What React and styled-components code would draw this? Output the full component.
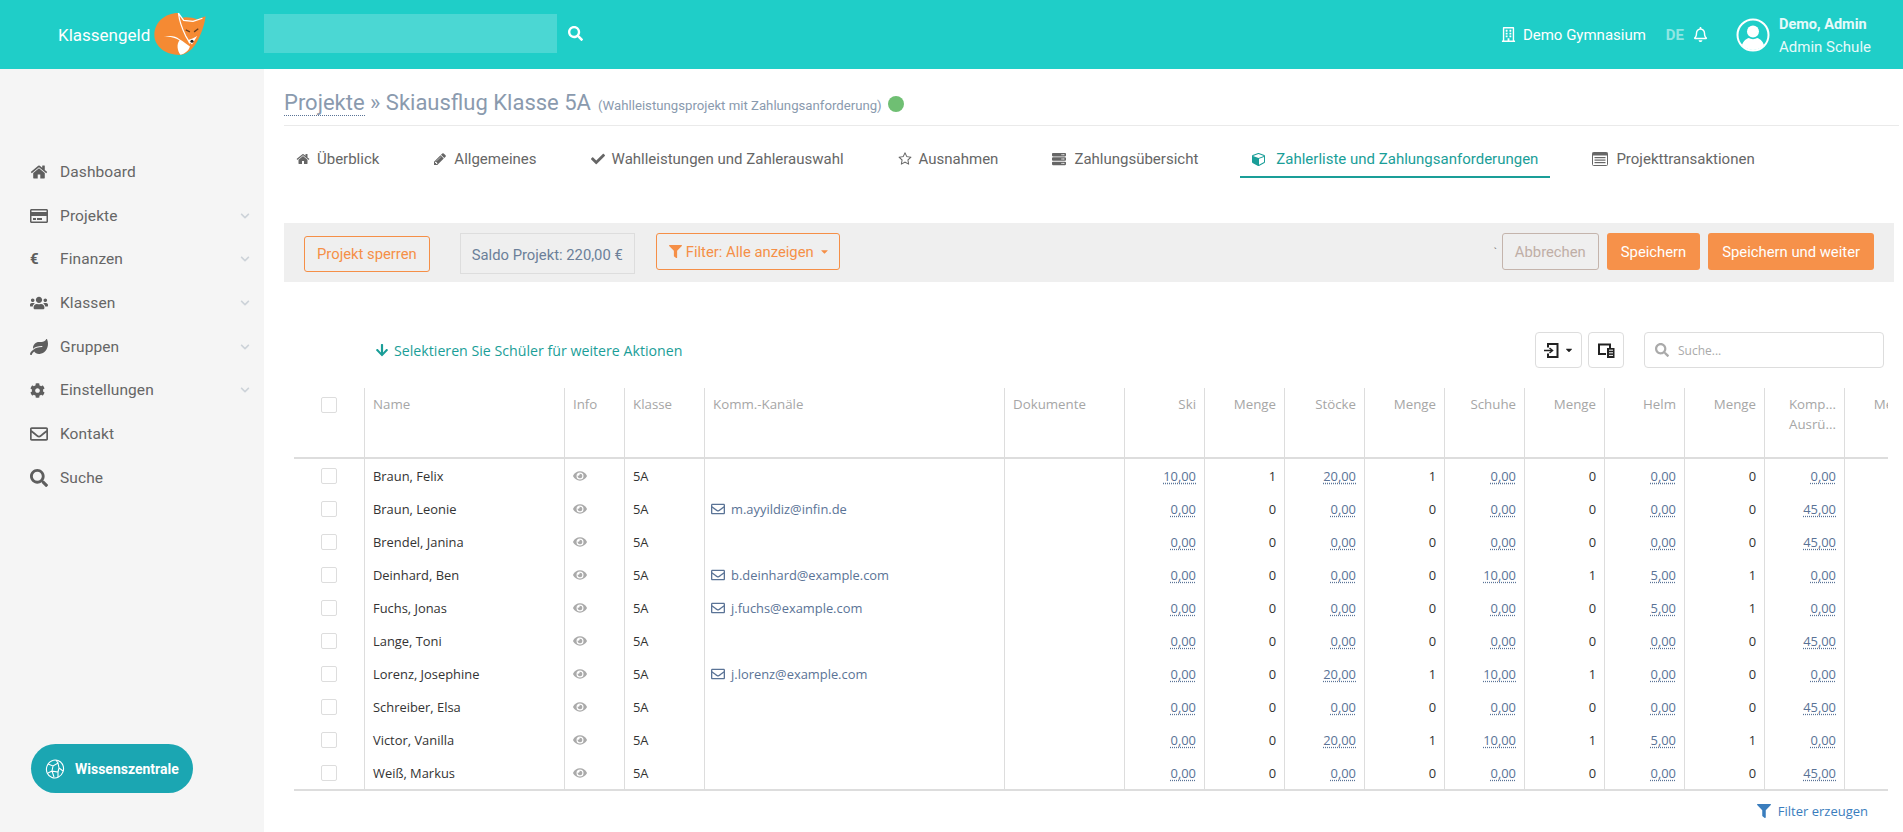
import styled, { createGlobalStyle } from 'styled-components';
import {
    FaCheck, FaServer, FaRegCreditCard, FaUsers, FaLeaf, FaCog, FaRegEnvelope, FaSearch,
    FaEye, FaArrowDown, FaFilter, FaRegBell, FaRegBuilding, FaChevronDown, FaCaretDown,
} from 'react-icons/fa';

const GlobalStyle = createGlobalStyle`
    * { box-sizing: border-box; }
    html, body { margin: 0; padding: 0; height: 100%; overflow: hidden; }
    body { font-family: Roboto, "Liberation Sans", sans-serif; background: #fff; color: #333; }
`

const Page = styled.div`
    height: 832px;
    display: flex;
    flex-direction: column;
`
const TopBar = styled.header`
    height: 69px;
    flex: none;
    background: #1fcec8;
    display: flex;
    align-items: center;
    color: #fff;
`
const Brand = styled.div`
    width: 264px;
    padding-left: 58px;
    display: flex;
    align-items: center;
    gap: 3px;
    font-size: 17px;
`
const SearchBlock = styled.div`
    width: 293px;
    height: 39px;
    background: rgba(255, 255, 255, 0.2);
    margin-top: -2px;
`
const SearchGlyph = styled(FaSearch)`
    font-size: 15px;
    margin-left: 11px;
    margin-top: -2px;
`
const TopRight = styled.div`
    margin-left: auto;
    display: flex;
    align-items: center;
    padding-right: 32px;
    font-size: 15px;
`
const School = styled.div`
    display: flex;
    align-items: center;
    gap: 7px;
    margin-right: 20px;
    svg { font-size: 15px; }
`
const Lang = styled.span`
    font-weight: 700;
    font-size: 15px;
    color: rgba(255, 255, 255, 0.5);
    margin-right: 9px;
`
const Avatar = styled.svg`
    width: 34px;
    height: 34px;
    margin-left: 28px;
    margin-right: 9px;
`
const UserBox = styled.div`
    line-height: 23px;
    margin-top: 2px;
    color: #e6fafa;
`
const UserName = styled.div`
    font-weight: 700;
    font-size: 14.5px;
`

const Body = styled.div`
    flex: 1;
    display: flex;
    min-height: 0;
`
const Sidebar = styled.aside`
    width: 264px;
    flex: none;
    background: #f5f5f5;
    padding-top: 81px;
    display: flex;
    flex-direction: column;
`
const NavItem = styled.div`
    height: 43.7px;
    flex: none;
    padding: 0 14px 0 30px;
    display: flex;
    align-items: center;
    color: #666;
    font-size: 15.5px;
    letter-spacing: 0.1px;
`
const NavIcon = styled.span`
    width: 30px;
    display: flex;
    align-items: center;
    font-size: 18px;
    color: #5e5e5e;
`
const EuroGlyph = styled.span`
    font-size: 15px;
    font-weight: 700;
`
const NavChevron = styled(FaChevronDown)`
    margin-left: auto;
    font-size: 10px;
    color: #cdd3d9;
`
const HelpPill = styled.div`
    margin: auto 0 39px 31px;
    width: 162px;
    height: 49px;
    border-radius: 25px;
    background: #1ba6b2;
    color: #fff;
    display: flex;
    align-items: center;
    padding-left: 14px;
    gap: 10px;
    font-size: 14px;
    font-weight: 700;
`

const Main = styled.main`
    flex: 1;
    min-width: 0;
    padding: 0 4px 0 20px;
`
const TitleRow = styled.div`
    height: 57px;
    display: flex;
    align-items: center;
    padding-top: 11px;
    border-bottom: 1px solid #eaeaea;
    color: #8a9aae;
    font-size: 22px;
    white-space: nowrap;
`
const TitleLink = styled.span`
    border-bottom: 1px dotted #5a7396;
    line-height: 25px;
`
const TitleSub = styled.span`
    font-size: 13.2px;
    margin: 5px 6px 0 7px;
`
const StatusDot = styled.span`
    width: 16px;
    height: 16px;
    border-radius: 50%;
    background: #6fbf73;
    margin-top: 2px;
`
const Tabs = styled.nav`
    display: flex;
    height: 52px;
    gap: 30px;
`
const Tab = styled.div`
    padding: 15px 12px 0;
    display: flex;
    align-items: center;
    gap: ${p => p.$gap || 7}px;
    font-size: 15px;
    white-space: nowrap;
    color: ${p => p.$active ? '#1a9e98' : '#666'};
    border-bottom: 2px solid ${p => p.$active ? '#1a9e98' : 'transparent'};
    svg { font-size: 14px; flex: none; }
`
const Toolbar = styled.div`
    margin: 45px 5px 0 0;
    height: 59px;
    background: #efefef;
    display: flex;
    align-items: flex-start;
    padding: 10px 20px 0 20px;
    font-size: 14.8px;
`
const OutlineButton = styled.div`
    height: 36px;
    border: 1px solid #f58f47;
    border-radius: 3px;
    color: #f58f47;
    padding: 0 12px;
    display: flex;
    align-items: center;
    gap: 4px;
    white-space: nowrap;
`
const LockButton = styled(OutlineButton)`
    margin-top: 3px;
    margin-right: 30px;
`
const FilterButton = styled(OutlineButton)`
    margin-left: 21px;
    height: 37px;
    padding-right: 9px;
    svg { font-size: 13px; }
`
const CaretMark = styled(FaCaretDown)`
    margin-left: 1px;
`
const Saldo = styled.div`
    height: 41px;
    border: 1px solid #ddd;
    color: #6b7f99;
    padding: 2px 11px 0;
    display: flex;
    align-items: center;
    white-space: nowrap;
`
const Tick = styled.span`
    margin-left: auto;
    margin-top: 15px;
    width: 8px;
    color: #777;
    font-size: 11px;
    line-height: 10px;
`
const CancelButton = styled.div`
    height: 37px;
    margin-right: 8px;
    padding: 0 12px;
    border: 1px solid #c4b4ac;
    border-radius: 3px;
    color: #bfaea6;
    display: flex;
    align-items: center;
`
const SaveButton = styled.div`
    height: 37px;
    margin-left: ${p => p.$gap ? 8 : 0}px;
    padding: 0 14px;
    border-radius: 3px;
    background: #f6914a;
    color: #fff;
    display: flex;
    align-items: center;
    white-space: nowrap;
`
const ActionsRow = styled.div`
    margin: 50px 15px 0 0;
    height: 36px;
    display: flex;
    align-items: center;
    padding-left: 91px;
`
const SelectHint = styled.div`
    display: flex;
    align-items: center;
    gap: 5px;
    color: #1a9e98;
    font-family: "Open Sans", sans-serif;
    font-size: 14.2px;
    svg { font-size: 14px; }
`
const IconButton = styled.div`
    height: 36px;
    border: 1px solid #ddd;
    border-radius: 4px;
    display: flex;
    align-items: center;
    justify-content: center;
    gap: 5px;
    color: #222;
    width: ${p => p.$w}px;
    margin-left: ${p => p.$ml};
    svg { flex: none; }
`
const SearchField = styled.div`
    width: 240px;
    height: 36px;
    margin-left: 20px;
    border: 1px solid #ddd;
    border-radius: 4px;
    display: flex;
    align-items: center;
    gap: 9px;
    padding-left: 10px;
    color: #aaa;
    font-family: "Open Sans", sans-serif;
    font-size: 12px;
    svg { font-size: 14px; }
`
const TableWrap = styled.div`
    margin: 20px 0 0 10px;
    width: 1594px;
    overflow: hidden;
    border-bottom: 2px solid #ddd;
`
const Table = styled.table`
    width: 1631px;
    table-layout: fixed;
    border-collapse: separate;
    border-spacing: 0;
    font-family: "Open Sans", sans-serif;
    font-size: 12.9px;
`
const Th = styled.th`
    height: 71px;
    vertical-align: top;
    padding: 6px 8px 0;
    font-weight: 400;
    font-size: 13.3px;
    line-height: 20px;
    color: #a6a6a6;
    text-align: ${p => p.$right ? 'right' : 'left'};
    border-right: 1px solid #ddd;
    border-bottom: 2px solid #ddd;
    white-space: nowrap;
`
const Td = styled.td`
    height: 33px;
    padding: 0 8px;
    color: #333;
    text-align: ${p => p.$right ? 'right' : 'left'};
    border-right: 1px solid #ddd;
    white-space: nowrap;
    overflow: hidden;
`
const Box = styled.span`
    display: block;
    width: 16px;
    height: 16px;
    margin-left: 19px;
    border: 1px solid #ddd;
    border-radius: 2px;
    background: #fff;
`
const HeadBox = styled(Box)`
    margin-top: 3px;
`
const ViewEye = styled(FaEye)`
    display: block;
    font-size: 14px;
    color: #aaa;
`
const Mail = styled.span`
    display: inline-flex;
    align-items: center;
    vertical-align: middle;
    gap: 6px;
    color: #5a7396;
    margin-left: -2px;
    svg { font-size: 14px; }
`
const Amount = styled.span`
    color: #5a7396;
    text-decoration: underline dotted #5a7396;
    text-underline-offset: 2px;
`
const Footer = styled.div`
    margin: 11px 31px 0 0;
    display: flex;
    justify-content: flex-end;
    align-items: center;
    gap: 7px;
    color: #3a7dbd;
    font-family: "Open Sans", sans-serif;
    font-size: 13px;
    svg { font-size: 14px; }
`

function Fa4({ d, size = 14 }) {
    return (
        <svg width={size} height={size} viewBox="0 0 1792 1792" fill="currentColor"><path d={d} /></svg>
    )
}

const HOME = "M1472 992v480q0 26-19 45t-45 19h-384v-384h-256v384h-384q-26 0-45-19t-19-45v-480q0-1 .5-3t.5-3l575-474 575 474q1 2 1 6zm223-69l-62 74q-8 9-21 11h-3q-13 0-21-7l-692-577-692 577q-12 8-24 7-13-2-21-11l-62-74q-8-10-7-23.500t11-21.500l719-599q32-26 76-26t76 26l244 204v-195q0-14 9-23t23-9h192q14 0 23 9t9 23v408l219 182q10 8 11 21.500t-7 23.500z"
const PENCIL = "M491 1536l91-91-235-235-91 91v107h128v128h107zm523-928q0-22-22-22-10 0-17 7l-542 542q-7 7-7 17 0 22 22 22 10 0 17-7l542-542q7-7 7-17zm-54-192l416 416-832 832h-416v-416zm683 96q0 53-37 90l-166 166-416-416 166-165q36-38 90-38 53 0 91 38l235 234q37 39 37 91z"
const STAR = "M1201 1004l306-297-422-62-189-382-189 382-422 62 306 297-73 421 378-199 377 199zm527-357q0 22-26 48l-363 354 86 500q1 7 1 20 0 50-41 50-19 0-40-12l-449-236-449 236q-22 12-40 12-21 0-31.500-14.500t-10.500-35.500q0-6 2-20l86-500-364-354q-25-27-25-48 0-37 56-46l502-73 225-455q19-41 49-41t49 41l225 455 502 73q56 9 56 46z"
const CUBE = "M896 1629l640-349v-636l-640 233v752zm-64-864l698-254-698-254-698 254zm832-252v768q0 35-18 65t-49 47l-704 384q-28 16-61 16t-61-16l-704-384q-31-17-49-47t-18-65v-768q0-40 23-73t61-47l704-256q22-8 44-8t44 8l704 256q38 14 61 47t23 73z"

function ListAltIcon() {
    return (
        <svg width="16" height="14" viewBox="0 0 16 14" fill="currentColor">
            <rect x="0.5" y="0.5" width="15" height="13" rx="1" fill="none" stroke="currentColor" />
            <rect x="0.5" y="0.5" width="15" height="3" />
            <rect x="2.5" y="5" width="11" height="1.2" />
            <rect x="2.5" y="7.500" width="11" height="1.2" />
            <rect x="2.5" y="10" width="11" height="1.2" />
        </svg>
    )
}

function FoxLogo() {
    return (
        <svg width="55" height="46" viewBox="0 0 52 44">
            <path d="M24 1 C11 1 1 10 1 22 C1 34 14 42 27 41 C33 40 38 35 41 30 C45 23 49 13 50 4 L42 7 C37 5 30 4 27 6 Z" fill="#f58a33" />
            <path d="M24 1 C25 9 28 17 31 23 C33 26 34 28 35 30 M24 1 L29 8 L38 9 L47 6" fill="none" stroke="#fff" strokeWidth="1.200" />
            <path d="M10 24 C16 22 21 23 25 26 C29 28 32 31 35 33 C34 37 30 40 26 41 C23 37 22 31 25 27 C20 24 15 23 10 24 Z" fill="#fff" />
            <path d="M33 27 L37 31 L42 23 L38 25 Z" fill="#fff" />
            <path d="M31 17 L35 19 M43 16 L39 19" stroke="#6b4020" strokeWidth="1.300" />
            <circle cx="37" cy="28" r="1.500" fill="#222" />
        </svg>
    )
}

function UserAvatar() {
    return (
        <Avatar viewBox="0 0 34 34">
            <defs>
                <clipPath id="avatar-clip"><circle cx="17" cy="17" r="15" /></clipPath>
            </defs>
            <circle cx="17" cy="17" r="15.500" fill="none" stroke="#fff" strokeWidth="2" />
            <g clipPath="url(#avatar-clip)" fill="#fff">
                <circle cx="17" cy="13.500" r="6" />
                <path d="M5 34 C5 24 10 20.500 13 20 C15 21.500 19 21.500 21 20 C24 20.500 29 24 29 34 Z" />
            </g>
        </Avatar>
    )
}

function NetGlobe() {
    return (
        <svg width="20" height="20" viewBox="0 0 20 20" fill="none" stroke="#fff" strokeWidth="1.100">
            <ellipse cx="10" cy="10" rx="8.500" ry="9" transform="rotate(20 10 10)" />
            <path d="M3 5 L8 7 L13 4 L14 9 L18 12 M8 7 L7 12 L13 13 L14 9 M7 12 L3 14 M7 12 L9 18 M13 13 L13 18 M13 4 L11 1" />
        </svg>
    )
}

function ImportIcon() {
    return (
        <svg width="15" height="15" viewBox="0 0 15 15" fill="none" stroke="currentColor" strokeWidth="2">
            <path d="M4 4.500 V1 H13.500 V14 H4 V10.500" />
            <path d="M0 7.500 H8" strokeWidth="1.500" />
            <path d="M5.500 5 L8.500 7.500 L5.500 10" strokeWidth="1.500" />
        </svg>
    )
}

function DevicesIcon() {
    return (
        <svg width="17" height="15" viewBox="0 0 17 15" fill="currentColor">
            <path d="M0 0.500 H13 V5 H11 V2.500 H2 V10 H8 V12 H0 Z" />
            <rect x="9" y="5" width="7.500" height="10" />
            <path d="M11 7.200 H15 M11 9.800 H15 M11 12.400 H15" stroke="#fff" strokeWidth="1" />
        </svg>
    )
}

const navItems = [
    { label: 'Dashboard', icon: <Fa4 d={HOME} size={18} /> },
    { label: 'Projekte', icon: <FaRegCreditCard />, sub: true },
    { label: 'Finanzen', icon: <EuroGlyph>€</EuroGlyph>, sub: true },
    { label: 'Klassen', icon: <FaUsers />, sub: true },
    { label: 'Gruppen', icon: <FaLeaf />, sub: true },
    { label: 'Einstellungen', icon: <FaCog size={15} />, sub: true },
    { label: 'Kontakt', icon: <FaRegEnvelope /> },
    { label: 'Suche', icon: <FaSearch /> },
]

const tabs = [
    { label: 'Überblick', icon: <Fa4 d={HOME} /> },
    { label: 'Allgemeines', icon: <Fa4 d={PENCIL} /> },
    { label: 'Wahlleistungen und Zahlerauswahl', icon: <FaCheck /> },
    { label: 'Ausnahmen', icon: <Fa4 d={STAR} /> },
    { label: 'Zahlungsübersicht', icon: <FaServer />, gap: 8 },
    { label: 'Zahlerliste und Zahlungsanforderungen', icon: <Fa4 d={CUBE} />, gap: 10, active: true },
    { label: 'Projekttransaktionen', icon: <ListAltIcon />, gap: 8 },
]

const widths = [71, 200, 60, 80, 300, 120, 80, 80, 80, 80, 80, 80, 80, 80, 80, 80]
const heads = ['Ski', 'Menge', 'Stöcke', 'Menge', 'Schuhe', 'Menge', 'Helm', 'Menge']

const rows = [
    { name: 'Braun, Felix', vals: ['10,00', 1, '20,00', 1, '0,00', 0, '0,00', 0, '0,00'] },
    { name: 'Braun, Leonie', mail: 'm.ayyildiz@infin.de', vals: ['0,00', 0, '0,00', 0, '0,00', 0, '0,00', 0, '45,00'] },
    { name: 'Brendel, Janina', vals: ['0,00', 0, '0,00', 0, '0,00', 0, '0,00', 0, '45,00'] },
    { name: 'Deinhard, Ben', mail: 'b.deinhard@example.com', vals: ['0,00', 0, '0,00', 0, '10,00', 1, '5,00', 1, '0,00'] },
    { name: 'Fuchs, Jonas', mail: 'j.fuchs@example.com', vals: ['0,00', 0, '0,00', 0, '0,00', 0, '5,00', 1, '0,00'] },
    { name: 'Lange, Toni', vals: ['0,00', 0, '0,00', 0, '0,00', 0, '0,00', 0, '45,00'] },
    { name: 'Lorenz, Josephine', mail: 'j.lorenz@example.com', vals: ['0,00', 0, '20,00', 1, '10,00', 1, '0,00', 0, '0,00'] },
    { name: 'Schreiber, Elsa', vals: ['0,00', 0, '0,00', 0, '0,00', 0, '0,00', 0, '45,00'] },
    { name: 'Victor, Vanilla', vals: ['0,00', 0, '20,00', 1, '10,00', 1, '5,00', 1, '0,00'] },
    { name: 'Weiß, Markus', vals: ['0,00', 0, '0,00', 0, '0,00', 0, '0,00', 0, '45,00'] },
]

function App() {
    return (
        <>
            <GlobalStyle />
            <Page>
                <TopBar>
                    <Brand>Klassengeld <FoxLogo /></Brand>
                    <SearchBlock />
                    <SearchGlyph />
                    <TopRight>
                        <School><FaRegBuilding /> Demo Gymnasium</School>
                        <Lang>DE</Lang>
                        <FaRegBell size={15} />
                        <UserAvatar />
                        <UserBox>
                            <UserName>Demo, Admin</UserName>
                            <div>Admin Schule</div>
                        </UserBox>
                    </TopRight>
                </TopBar>
                <Body>
                    <Sidebar>
                        { navItems.map((item) => (
                            <NavItem key={ item.label }>
                                <NavIcon>{ item.icon }</NavIcon>
                                { item.label }
                                { item.sub && <NavChevron /> }
                            </NavItem>
                        )) }
                        <HelpPill><NetGlobe /> Wissenszentrale</HelpPill>
                    </Sidebar>
                    <Main>
                        <TitleRow>
                            <TitleLink>Projekte</TitleLink>&nbsp;» Skiausflug Klasse 5A
                            <TitleSub>(Wahlleistungsprojekt mit Zahlungsanforderung)</TitleSub>
                            <StatusDot />
                        </TitleRow>
                        <Tabs>
                            { tabs.map((tab) => (
                                <Tab key={ tab.label } $active={ tab.active } $gap={ tab.gap }>{ tab.icon }{ tab.label }</Tab>
                            )) }
                        </Tabs>
                        <Toolbar>
                            <LockButton>Projekt sperren</LockButton>
                            <Saldo>Saldo Projekt: 220,00 €</Saldo>
                            <FilterButton><FaFilter /> Filter: Alle anzeigen <CaretMark size={11} /></FilterButton>
                            <Tick>`</Tick>
                            <CancelButton>Abbrechen</CancelButton>
                            <SaveButton>Speichern</SaveButton>
                            <SaveButton $gap>Speichern und weiter</SaveButton>
                        </Toolbar>
                        <ActionsRow>
                            <SelectHint><FaArrowDown /> Selektieren Sie Schüler für weitere Aktionen</SelectHint>
                            <IconButton $w={47} $ml="auto"><ImportIcon /><FaCaretDown size={10} /></IconButton>
                            <IconButton $w={36} $ml="6px"><DevicesIcon /></IconButton>
                            <SearchField><FaSearch /> Suche...</SearchField>
                        </ActionsRow>
                        <TableWrap>
                            <Table>
                                <colgroup>
                                    { widths.map((w, i) => <col key={ i } width={ w } />) }
                                </colgroup>
                                <thead>
                                    <tr>
                                        <Th><HeadBox /></Th>
                                        <Th>Name</Th>
                                        <Th>Info</Th>
                                        <Th>Klasse</Th>
                                        <Th>Komm.-Kanäle</Th>
                                        <Th>Dokumente</Th>
                                        { heads.map((h, i) => <Th key={ i } $right>{ h }</Th>) }
                                        <Th $right>Komp...<br />Ausrü...</Th>
                                        <Th $right>Menge</Th>
                                    </tr>
                                </thead>
                                <tbody>
                                    { rows.map((row) => (
                                        <tr key={ row.name }>
                                            <Td><Box /></Td>
                                            <Td>{ row.name }</Td>
                                            <Td><ViewEye /></Td>
                                            <Td>5A</Td>
                                            <Td>{ row.mail && <Mail><FaRegEnvelope /> { row.mail }</Mail> }</Td>
                                            <Td />
                                            { row.vals.map((v, i) => (
                                                <Td key={ i } $right>{ i % 2 === 0 ? <Amount>{ v }</Amount> : v }</Td>
                                            )) }
                                            <Td />
                                        </tr>
                                    )) }
                                </tbody>
                            </Table>
                        </TableWrap>
                        <Footer><FaFilter /> Filter erzeugen</Footer>
                    </Main>
                </Body>
            </Page>
        </>
    )
}

export default App
